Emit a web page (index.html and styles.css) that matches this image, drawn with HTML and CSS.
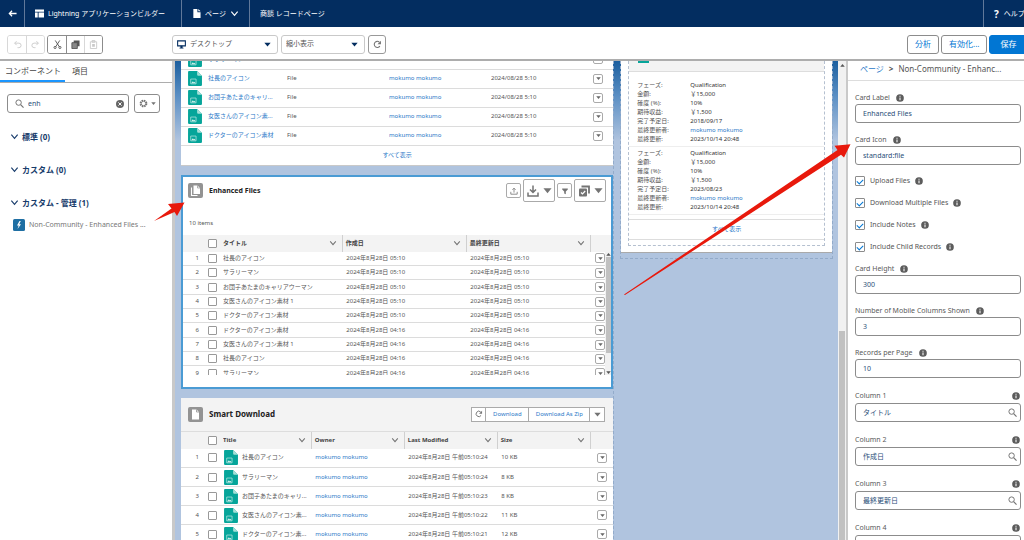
FILE: index.html
```html
<!DOCTYPE html>
<html lang="ja">
<head>
<meta charset="utf-8">
<title>Lightning アプリケーションビルダー</title>
<link rel="stylesheet" href="styles.css">
</head>
<body>
<svg class="sprite" aria-hidden="true">
  <symbol id="chev" viewBox="0 0 10 10"><path d="M1.500 3 5 7 8.500 3" fill="none" stroke="currentColor" stroke-width="1.300"/></symbol>
  <symbol id="tri" viewBox="0 0 10 10"><path d="M0.500 2.500h9L5 8z" fill="currentColor"/></symbol>
  <symbol id="info" viewBox="0 0 10 10"><circle cx="5" cy="5" r="4.800" fill="#5c5c5c"/><path d="M5 2.200v1.300M5 4.500v3.300" stroke="#fff" stroke-width="1.300"/></symbol>
  <symbol id="lens" viewBox="0 0 10 10"><circle cx="4" cy="4" r="3" fill="none" stroke="#747474" stroke-width="1.100"/><path d="M6.200 6.200 9.500 9.500" stroke="#747474" stroke-width="1.300"/></symbol>
  <symbol id="reload" viewBox="0 0 10 10"><path d="M7.600 6.800A3.400 3.400 0 1 1 7 2.300" fill="none" stroke="currentColor" stroke-width="1.200"/><path d="M8.800.8v3.800H5z" fill="currentColor"/></symbol>
  <symbol id="file" viewBox="0 0 13 14"><path d="M1 0h7.500L13 4.500V13a1 1 0 0 1-1 1H1a1 1 0 0 1-1-1V1a1 1 0 0 1 1-1z" fill="#06a59a"/><path d="M8.500 0 13 4.500H9.500a1 1 0 0 1-1-1z" fill="#a5e0d8"/><path d="M2.500 7.500h5v4.500h-5z" fill="none" stroke="#b5e6e0" stroke-width=".7"/><path d="M3 11.500l1.500-2 1 1.200.6-.7 1 1.500z" fill="#d5f2ee"/></symbol>
</svg>

<header class="topbar">
  <button class="top-back" aria-label="戻る"><svg class="i9" viewBox="0 0 10 10"><path d="M9.500 5H1.500M4.500 2 1.500 5l3 3" fill="none" stroke="#fff" stroke-width="1.400"/></svg></button>
  <div class="top-cell app"><svg class="i9" viewBox="0 0 10 10" fill="#fff"><path d="M0 .5h10v2.500H0zM0 4h3v5.500H0zM4 4h6v5.500H4z"/></svg><span>Lightning アプリケーションビルダー</span></div>
  <button class="top-cell page-menu"><svg class="i9" viewBox="0 0 10 10"><path d="M1.500 0h4.500v3.500H9.500V10h-8z" fill="#fff"/><path d="M7 0l2.500 2.500H7z" fill="#fff"/></svg><span>ページ</span><svg class="i9"><use href="#chev"/></svg></button>
  <div class="top-cell record">商談 レコードページ</div>
  <a class="top-cell help" href="#"><b>?</b><span>ヘルプ</span></a>
</header>

<div class="toolbar">
  <div class="tools">
    <div class="group off">
      <button aria-label="元に戻す"><svg class="i9" viewBox="0 0 10 10"><path d="M2 3.500h4.500a2.500 2.500 0 0 1 0 5H5M4 1.300 1.800 3.500 4 5.700" fill="none" stroke="#c9c9c9"/></svg></button>
      <button aria-label="やり直し"><svg class="i9" viewBox="0 0 10 10"><path d="M8 3.500H3.500a2.500 2.500 0 0 0 0 5H5M6 1.300 8.200 3.500 6 5.700" fill="none" stroke="#c9c9c9"/></svg></button>
    </div>
    <div class="group">
      <button aria-label="切り取り"><svg class="i9" viewBox="0 0 10 10" fill="none" stroke="#555"><path d="M2.500.5 7 7.500M7.500.5 3 7.500"/><circle cx="2.300" cy="8.300" r="1.200"/><circle cx="7.700" cy="8.300" r="1.200"/></svg></button>
      <button aria-label="コピー"><svg class="i9" viewBox="0 0 10 10"><path d="M3 .5h6.500V7H3z" fill="#555"/><path d="M1 3h6v6.500H1z" fill="#888" stroke="#555"/></svg></button>
      <button class="dim" aria-label="貼り付け"><svg class="i9" viewBox="0 0 10 10"><path d="M1.500 2h7v7.500h-7zM3.500.5h3v2h-3z" fill="none" stroke="#c9c9c9"/><path d="M3.500 4.500h3v3h-3z" fill="#c9c9c9"/></svg></button>
    </div>
  </div>
  <div class="view">
    <label class="picker wide"><svg class="i9" viewBox="0 0 10 10"><path d="M.7 1h8.600v5.500H.7z" fill="none" stroke="#032d60" stroke-width="1.200"/><path d="M3.800 6.500h2.400v2h1V9.500H2.800v-1h1z" fill="#032d60"/></svg><select aria-label="画面"><option>デスクトップ</option></select><svg class="i7 navy"><use href="#tri"/></svg></label>
    <label class="picker"><select aria-label="表示倍率"><option>縮小表示</option></select><svg class="i7 navy"><use href="#tri"/></svg></label>
    <button class="square" aria-label="更新"><svg class="i9"><use href="#reload"/></svg></button>
  </div>
  <div class="actions">
    <button class="btn">分析</button><button class="btn">有効化...</button><button class="btn brand">保存</button>
  </div>
</div>

<main class="workspace">
  <aside class="left">
    <nav class="tabs"><a class="on" href="#">コンポーネント</a><a href="#">項目</a></nav>
    <div class="search-row">
      <label class="search"><svg class="i9"><use href="#lens"/></svg><input type="text" value="enh" aria-label="検索"><svg class="i8" viewBox="0 0 10 10"><circle cx="5" cy="5" r="5" fill="#666"/><path d="M3 3l4 4M7 3 3 7" stroke="#fff" stroke-width="1.200"/></svg></label>
      <button class="gear" aria-label="設定"><svg class="i9" viewBox="0 0 10 10"><circle cx="5" cy="5" r="3.500" fill="none" stroke="#747474" stroke-width="1.600" stroke-dasharray="1.800 .95"/><circle cx="5" cy="5" r="2.500" fill="none" stroke="#747474"/></svg><svg class="i5"><use href="#tri"/></svg></button>
    </div>
    <h3><svg class="i9"><use href="#chev"/></svg>標準 (0)</h3>
    <h3><svg class="i9"><use href="#chev"/></svg>カスタム (0)</h3>
    <h3><svg class="i9"><use href="#chev"/></svg>カスタム - 管理 (1)</h3>
    <a class="component" href="#"><svg class="i12" viewBox="0 0 12 12"><rect width="12" height="12" rx="1.500" fill="#1f6fa3"/><path d="M6.500 2 4 6.500h1.700L4.500 10 8 5.300H6.200L7.800 2z" fill="#fff"/></svg><span>Non-Community - Enhanced Files ...</span></a>
  </aside>

  <section class="canvas">
    <div class="regions">
      <div class="region main-region">
        <article class="card related">
          <table class="files">
            <colgroup><col class="f-title"><col class="f-col"><col class="f-col"><col class="f-col"><col></colgroup>
            <tr><td><a class="named" href="#"><svg class="doc"><use href="#file"/></svg><span>サラリーマン</span></a></td><td>File</td><td><a href="#">mokumo mokumo</a></td><td>2024/08/28 5:10</td><td class="end"><button class="menu" aria-label="操作"><svg class="i5"><use href="#tri"/></svg></button></td></tr>
            <tr><td><a class="named" href="#"><svg class="doc"><use href="#file"/></svg><span>社長のアイコン</span></a></td><td>File</td><td><a href="#">mokumo mokumo</a></td><td>2024/08/28 5:10</td><td class="end"><button class="menu" aria-label="操作"><svg class="i5"><use href="#tri"/></svg></button></td></tr>
            <tr><td><a class="named" href="#"><svg class="doc"><use href="#file"/></svg><span>お団子あたまのキャリ...</span></a></td><td>File</td><td><a href="#">mokumo mokumo</a></td><td>2024/08/28 5:10</td><td class="end"><button class="menu" aria-label="操作"><svg class="i5"><use href="#tri"/></svg></button></td></tr>
            <tr><td><a class="named" href="#"><svg class="doc"><use href="#file"/></svg><span>女医さんのアイコン素...</span></a></td><td>File</td><td><a href="#">mokumo mokumo</a></td><td>2024/08/28 5:10</td><td class="end"><button class="menu" aria-label="操作"><svg class="i5"><use href="#tri"/></svg></button></td></tr>
            <tr><td><a class="named" href="#"><svg class="doc"><use href="#file"/></svg><span>ドクターのアイコン素材</span></a></td><td>File</td><td><a href="#">mokumo mokumo</a></td><td>2024/08/28 5:10</td><td class="end"><button class="menu" aria-label="操作"><svg class="i5"><use href="#tri"/></svg></button></td></tr>
          </table>
          <a class="all" href="#">すべて表示</a>
        </article>

        <article class="card enhanced">
          <div class="card-head">
            <svg class="i15" viewBox="0 0 15 15"><rect width="15" height="15" rx="2" fill="#939393"/><path d="M5.500 2.500h4L12 5v6H5.500z" fill="#fff"/><path d="M9.500 2.500V5H12" fill="none" stroke="#939393" stroke-width=".7"/><path d="M3.500 4.500V12.500H9.500" fill="none" stroke="#fff" stroke-width="1.100"/></svg>
            <h2>Enhanced Files</h2>
            <button class="small" aria-label="アップロード"><svg class="i8" viewBox="0 0 10 10" fill="none" stroke="currentColor"><path d="M5 7V1.500M3 3.500l2-2 2 2M1 6v3h8V6"/></svg></button>
            <button class="big" aria-label="ダウンロード"><svg class="i12" viewBox="0 0 12 12" fill="none" stroke="currentColor" stroke-width="1.500"><path d="M6 .5V7M3 4.500l3 3 3-3M1 7.500V11h10V7.500"/></svg><svg class="i9"><use href="#tri"/></svg></button>
            <button class="small" aria-label="絞り込み"><svg class="i8" viewBox="0 0 10 10"><path d="M1.500 2h7v1L6 5.500V9L4 8V5.500L1.500 3z" fill="currentColor"/></svg></button>
            <button class="big" aria-label="選択"><svg class="i12" viewBox="0 0 12 12"><path d="M3.500 1.500h7.500v7" fill="none" stroke="currentColor" stroke-width="1.800"/><rect x="1" y="3.500" width="8" height="8" rx="1" fill="currentColor"/><path d="M3 7.500 4.500 9 7.200 6" fill="none" stroke="#fff" stroke-width="1.200"/></svg><svg class="i9"><use href="#tri"/></svg></button>
          </div>
          <p class="count">10 items</p>
          <table class="grid">
            <colgroup><col class="g-num"><col class="g-check"><col><col class="g-date"><col class="g-date"><col class="g-end"></colgroup>
            <tr><th></th><th><input type="checkbox" aria-label="すべて選択"></th><th><div>タイトル<svg class="i8"><use href="#chev"/></svg></div></th><th><div>作成日<svg class="i8"><use href="#chev"/></svg></div></th><th><div>最終更新日<svg class="i8"><use href="#chev"/></svg></div></th><th></th></tr>
          </table>
          <div class="scroller">
          <table class="grid rows">
            <colgroup><col class="g-num"><col class="g-check"><col><col class="g-date"><col class="g-date"><col class="g-end2"></colgroup>
            <tr><td class="n">1</td><td><input type="checkbox" aria-label="1"></td><td>社長のアイコン</td><td>2024年8月28日 05:10</td><td>2024年8月28日 05:10</td><td class="end"><button class="menu" aria-label="操作"><svg class="i5"><use href="#tri"/></svg></button></td></tr>
            <tr><td class="n">2</td><td><input type="checkbox" aria-label="2"></td><td>サラリーマン</td><td>2024年8月28日 05:10</td><td>2024年8月28日 05:10</td><td class="end"><button class="menu" aria-label="操作"><svg class="i5"><use href="#tri"/></svg></button></td></tr>
            <tr><td class="n">3</td><td><input type="checkbox" aria-label="3"></td><td>お団子あたまのキャリアウーマン</td><td>2024年8月28日 05:10</td><td>2024年8月28日 05:10</td><td class="end"><button class="menu" aria-label="操作"><svg class="i5"><use href="#tri"/></svg></button></td></tr>
            <tr><td class="n">4</td><td><input type="checkbox" aria-label="4"></td><td>女医さんのアイコン素材 1</td><td>2024年8月28日 05:10</td><td>2024年8月28日 05:10</td><td class="end"><button class="menu" aria-label="操作"><svg class="i5"><use href="#tri"/></svg></button></td></tr>
            <tr><td class="n">5</td><td><input type="checkbox" aria-label="5"></td><td>ドクターのアイコン素材</td><td>2024年8月28日 05:10</td><td>2024年8月28日 05:10</td><td class="end"><button class="menu" aria-label="操作"><svg class="i5"><use href="#tri"/></svg></button></td></tr>
            <tr><td class="n">6</td><td><input type="checkbox" aria-label="6"></td><td>ドクターのアイコン素材</td><td>2024年8月28日 04:16</td><td>2024年8月28日 04:16</td><td class="end"><button class="menu" aria-label="操作"><svg class="i5"><use href="#tri"/></svg></button></td></tr>
            <tr><td class="n">7</td><td><input type="checkbox" aria-label="7"></td><td>女医さんのアイコン素材 1</td><td>2024年8月28日 04:16</td><td>2024年8月28日 04:16</td><td class="end"><button class="menu" aria-label="操作"><svg class="i5"><use href="#tri"/></svg></button></td></tr>
            <tr><td class="n">8</td><td><input type="checkbox" aria-label="8"></td><td>社長のアイコン</td><td>2024年8月28日 04:16</td><td>2024年8月28日 04:16</td><td class="end"><button class="menu" aria-label="操作"><svg class="i5"><use href="#tri"/></svg></button></td></tr>
            <tr><td class="n">9</td><td><input type="checkbox" aria-label="9"></td><td>サラリーマン</td><td>2024年8月28日 04:16</td><td>2024年8月28日 04:16</td><td class="end"><button class="menu" aria-label="操作"><svg class="i5"><use href="#tri"/></svg></button></td></tr>
          </table>
          <div class="mini-bar"><svg class="i5 up"><use href="#tri"/></svg><div class="mini-thumb"></div><svg class="i5"><use href="#tri"/></svg></div>
          </div>
        </article>

        <article class="card smart">
          <div class="card-head">
            <svg class="i15" viewBox="0 0 15 15"><rect width="15" height="15" rx="2" fill="#939393"/><path d="M4 2.500h4.500L11 5v7.500H4z" fill="#fff"/><path d="M8.500 2.500V5H11" fill="none" stroke="#939393" stroke-width=".8"/></svg>
            <h2>Smart Download</h2>
            <div class="joined"><button aria-label="更新"><svg class="i8"><use href="#reload"/></svg></button><button class="dl">Download</button><button class="zip">Download As Zip</button><button aria-label="その他"><svg class="i7"><use href="#tri"/></svg></button></div>
          </div>
          <table class="grid downloads">
            <colgroup><col class="g-num"><col class="g-check"><col><col class="s-col"><col class="s-col"><col class="s-col"><col class="s-end"></colgroup>
            <tr><th></th><th><input type="checkbox" aria-label="すべて選択"></th><th><div>Title<svg class="i8"><use href="#chev"/></svg></div></th><th><div>Owner<svg class="i8"><use href="#chev"/></svg></div></th><th><div>Last Modified<svg class="i8"><use href="#chev"/></svg></div></th><th><div>Size<svg class="i8"><use href="#chev"/></svg></div></th><th></th></tr>
            <tr><td class="n">1</td><td><input type="checkbox" aria-label="1"></td><td><span class="named"><svg class="doc"><use href="#file"/></svg><span>社長のアイコン</span></span></td><td><a href="#">mokumo mokumo</a></td><td>2024年8月28日 午前05:10:24</td><td>10 KB</td><td class="end"><button class="menu" aria-label="操作"><svg class="i5"><use href="#tri"/></svg></button></td></tr>
            <tr><td class="n">2</td><td><input type="checkbox" aria-label="2"></td><td><span class="named"><svg class="doc"><use href="#file"/></svg><span>サラリーマン</span></span></td><td><a href="#">mokumo mokumo</a></td><td>2024年8月28日 午前05:10:24</td><td>8 KB</td><td class="end"><button class="menu" aria-label="操作"><svg class="i5"><use href="#tri"/></svg></button></td></tr>
            <tr><td class="n">3</td><td><input type="checkbox" aria-label="3"></td><td><span class="named"><svg class="doc"><use href="#file"/></svg><span>お団子あたまのキャリ...</span></span></td><td><a href="#">mokumo mokumo</a></td><td>2024年8月28日 午前05:10:23</td><td>8 KB</td><td class="end"><button class="menu" aria-label="操作"><svg class="i5"><use href="#tri"/></svg></button></td></tr>
            <tr><td class="n">4</td><td><input type="checkbox" aria-label="4"></td><td><span class="named"><svg class="doc"><use href="#file"/></svg><span>女医さんのアイコン素...</span></span></td><td><a href="#">mokumo mokumo</a></td><td>2024年8月28日 午前05:10:22</td><td>11 KB</td><td class="end"><button class="menu" aria-label="操作"><svg class="i5"><use href="#tri"/></svg></button></td></tr>
            <tr><td class="n">5</td><td><input type="checkbox" aria-label="5"></td><td><span class="named"><svg class="doc"><use href="#file"/></svg><span>ドクターのアイコン素...</span></span></td><td><a href="#">mokumo mokumo</a></td><td>2024年8月28日 午前05:10:21</td><td>12 KB</td><td class="end"><button class="menu" aria-label="操作"><svg class="i5"><use href="#tri"/></svg></button></td></tr>
          </table>
        </article>
      </div>

      <div class="region side-region">
        <div class="side-card">
          <div class="side-inner">
            <div class="side-head"><span class="side-icon"></span></div>
            <dl><dt>フェーズ:</dt><dd>Qualification</dd><dt>金額:</dt><dd>￥15,000</dd><dt>確度 (%):</dt><dd>10%</dd><dt>期待収益:</dt><dd>￥1,500</dd><dt>完了予定日:</dt><dd>2018/09/17</dd><dt>最終更新者:</dt><dd><a href="#">mokumo mokumo</a></dd><dt>最終更新:</dt><dd>2023/10/14 20:48</dd></dl>
            <dl><dt>フェーズ:</dt><dd>Qualification</dd><dt>金額:</dt><dd>￥15,000</dd><dt>確度 (%):</dt><dd>10%</dd><dt>期待収益:</dt><dd>￥1,500</dd><dt>完了予定日:</dt><dd>2023/08/23</dd><dt>最終更新者:</dt><dd><a href="#">mokumo mokumo</a></dd><dt>最終更新:</dt><dd>2023/10/14 20:48</dd></dl>
            <a class="all side-all" href="#">すべて表示</a>
          </div>
        </div>
      </div>
    </div>
    <div class="bar"><svg class="i5 up"><use href="#tri"/></svg><div class="thumb"></div></div>
  </section>

  <aside class="props">
    <div class="crumbs"><a href="#">ページ</a><b>&gt;</b><span>Non-Community - Enhanc...</span></div>
    <form class="fields">
      <div class="field"><div class="lab"><label for="f1">Card Label</label><svg class="i8"><use href="#info"/></svg></div><input id="f1" type="text" value="Enhanced Files"></div>
      <div class="field"><div class="lab"><label for="f2">Card Icon</label><svg class="i8"><use href="#info"/></svg></div><input id="f2" type="text" value="standard:file"></div>
      <div class="checks">
        <div><input type="checkbox" id="c1" checked><label for="c1">Upload Files</label><svg class="i8"><use href="#info"/></svg></div>
        <div><input type="checkbox" id="c2" checked><label for="c2">Download Multiple Files</label><svg class="i8"><use href="#info"/></svg></div>
        <div><input type="checkbox" id="c3" checked><label for="c3">Include Notes</label><svg class="i8"><use href="#info"/></svg></div>
        <div><input type="checkbox" id="c4" checked><label for="c4">Include Child Records</label><svg class="i8"><use href="#info"/></svg></div>
      </div>
      <div class="field"><div class="lab"><label for="f3">Card Height</label><svg class="i8"><use href="#info"/></svg></div><input id="f3" type="text" value="300"></div>
      <div class="field"><div class="lab"><label for="f4">Number of Mobile Columns Shown</label><svg class="i8"><use href="#info"/></svg></div><input id="f4" type="text" value="3"></div>
      <div class="field"><div class="lab"><label for="f5">Records per Page</label><svg class="i8"><use href="#info"/></svg></div><input id="f5" type="text" value="10"></div>
      <div class="field column"><div class="lab"><label for="f6">Column 1</label><svg class="i8"><use href="#info"/></svg></div><div class="lookup"><input id="f6" type="text" value="タイトル"><svg class="i9"><use href="#lens"/></svg></div></div>
      <div class="field column"><div class="lab"><label for="f7">Column 2</label><svg class="i8"><use href="#info"/></svg></div><div class="lookup"><input id="f7" type="text" value="作成日"><svg class="i9"><use href="#lens"/></svg></div></div>
      <div class="field column"><div class="lab"><label for="f8">Column 3</label><svg class="i8"><use href="#info"/></svg></div><div class="lookup"><input id="f8" type="text" value="最終更新日"><svg class="i9"><use href="#lens"/></svg></div></div>
      <div class="field column"><div class="lab"><label for="f9">Column 4</label><svg class="i8"><use href="#info"/></svg></div><div class="lookup"><input id="f9" type="text" value=""><svg class="i9"><use href="#lens"/></svg></div></div>
    </form>
  </aside>
</main>

<svg class="arrows" viewBox="0 0 1024 540" aria-hidden="true" fill="#e8190c">
  <path d="M154 221 171.500 208.500 168 204 184.500 202.500 177 216 174.500 212z"/>
  <path d="M624 294.500 837.500 150 834.500 145.800 850.500 144.300 844 157.500 841 154.800 625 295z"/>
</svg>
</body>
</html>
```
FILE: styles.css
```css
* { box-sizing: border-box; }
html, body { height: 100%; }
body {
  margin: 0;
  display: flex;
  flex-direction: column;
  overflow: hidden;
  position: relative;
  font: 7px/10px "Noto Sans", "Noto Sans CJK JP", sans-serif;
  color: #555;
  background: #fff;
}
button, input, select { font: inherit; color: inherit; margin: 0; padding: 0; }
button { background: #fff; border: 0; display: flex; align-items: center; justify-content: center; }
a { color: #2a78c8; text-decoration: none; }
h2, h3, p, dl, dd { margin: 0; }
svg { flex: none; display: block; }
table { border-collapse: collapse; table-layout: fixed; width: 100%; }
td, th { padding: 0; white-space: nowrap; overflow: hidden; text-align: left; }

.sprite { position: absolute; width: 0; height: 0; }
.i5 { width: 5px; height: 5px; }
.i7 { width: 7px; height: 7px; }
.i8 { width: 8px; height: 8px; }
.i9 { width: 9px; height: 9px; }
.i12 { width: 12px; height: 12px; }
.i15 { width: 15px; height: 15px; }
.up { transform: rotate(180deg); }
.navy { color: #032d60; }

/* global header */
.topbar { flex: none; display: flex; height: 27px; background: #032d60; color: #fff; white-space: nowrap; }
.top-back { width: 25px; background: none; border-right: 1px solid #60789a; }
.top-cell { display: flex; align-items: center; gap: 4px; padding: 0 10px; border-right: 1px solid #60789a; background: none; color: #fff; }
.app { width: 157px; }
.page-menu { width: 68px; }
.record { border: 0; }
.help { margin-left: auto; width: 41px; border-right: 0; border-left: 1px solid #60789a; overflow: hidden; gap: 5px; }
.help b { font-size: 10px; }

/* toolbar */
.toolbar { flex: none; display: flex; height: 34px; padding: 2px 0 0 7px; align-items: center; border-bottom: 2px solid #adadad; overflow: hidden; }
.tools { width: 165px; display: flex; gap: 2px; }
.group { display: flex; border: 1px solid #8c8c8c; border-radius: 3px; height: 19px; overflow: hidden; }
.group button { width: 18px; }
.group button + button { border-left: 1px solid #8c8c8c; }
.group.off, .group.off button + button { border-color: #d8d8d8; }
.group .dim { border-color: #d8d8d8; }
.view { display: flex; gap: 3px; flex: 1; }
.picker { display: flex; align-items: center; width: 84px; height: 19px; border: 1px solid #c9c9c9; border-radius: 3px; padding: 0 6px 0 4px; gap: 4px; }
.picker.wide { width: 106px; }
.picker select { appearance: none; border: 0; background: none; flex: 1; min-width: 0; }
.square { width: 18px; height: 19px; border: 1px solid #999; border-radius: 3px; color: #747474; }
.actions { display: flex; gap: 2px; width: 117px; flex: none; white-space: nowrap; }
.btn { flex: none; height: 19px; border: 1px solid #8c8c8c; border-radius: 3px; color: #0176d3; font-size: 8px; padding: 0 7px; }
.btn.brand { background: #0176d3; border-color: #0176d3; color: #fff; padding: 0 10px; }

.workspace { flex: 1; min-height: 0; display: flex; }

/* component palette */
.left { width: 175px; flex: none; border-right: 3px solid #c9c9c9; }
.tabs { display: flex; height: 22px; border-bottom: 1px solid #adadad; font-size: 8px; }
.tabs a { color: #444; padding: 0 7px; line-height: 20px; }
.tabs .on { padding: 0 4px 0 5px; border-bottom: 2px solid #1b96ff; }
.search-row { display: flex; gap: 5px; padding: 11px 12px 18px 7px; }
.search { display: flex; flex: 1; min-width: 0; align-items: center; gap: 4px; height: 19px; border: 1px solid #8c8c8c; border-radius: 3px; padding: 0 4px 0 7px; }
.search input { flex: 1; width: 0; border: 0; outline: 0; color: #2b5079; }
.gear { flex: none; width: 26px; border: 1px solid #8c8c8c; border-radius: 3px; gap: 3px; color: #747474; }
.left h3 { display: flex; align-items: center; gap: 3px; height: 11px; margin: 0 0 22px 10px; font-size: 8px; color: #173b6b; }
.left h3 + .component { margin-top: -11px; }
.component { display: flex; align-items: center; gap: 4px; padding-left: 13px; color: #777; white-space: nowrap; }

/* page preview */
.canvas { flex: 1; min-width: 0; display: flex; background: linear-gradient(#1c5f9f, #5b8fc4 35px, #b0c4df 80px); overflow: hidden; }
.regions { flex: 1; min-width: 0; display: flex; gap: 6px; padding: 0 5px; align-items: flex-start; font-size: 6px; line-height: 9px; }
.region { min-width: 0; }
.main-region { flex: 435; padding-left: 1px; border-right: 1px dashed #93abca; }
.side-region { flex: 212; border: 1px dashed #93abca; border-top: 0; padding-bottom: 5px; }
.card { background: #fff; }
.related { margin: -11px 0 9px; border-bottom: 1px solid #c9c9c9; }
.files td { height: 19px; border-bottom: 1px solid #dcdcdc; }
.files td:first-child { padding-left: 7px; }
.f-title { width: 106px; }
.f-col { width: 102px; }
.named { display: flex; align-items: center; gap: 6px; }
.doc { width: 14px; height: 15px; }
.end { text-align: right; }
.menu { width: 10px; height: 10px; border: 1px solid #aaa; border-radius: 2px; color: #666; margin-left: auto; }
.files .end { padding-right: 11px; }
.all { display: block; text-align: center; line-height: 19px; font-size: 6px; }

.card-head { display: flex; align-items: center; color: #222; }
.card-head h2 { flex: 1; margin-left: 4px; font-size: 7px; line-height: 12px; }
.card-head button { color: #747474; border: 1px solid #aaa; border-radius: 2px; }
.enhanced { border: 2px solid #4a9bd4; height: 214px; margin-bottom: 9px; }
.enhanced .card-head { height: 28px; padding: 0 5px; gap: 2px; }
.small { width: 15px; height: 15px; }
.big { width: 32px; height: 23px; gap: 4px; }
.count { padding: 14px 6px 7px; line-height: 9px; }
.grid th { height: 17px; background: #f3f3f3; color: #444; }
.grid th div { display: flex; justify-content: space-between; align-items: center; height: 15px; padding-right: 5px; }
.grid th svg { color: #747474; }
.grid th + th + th + th { border-left: 1px solid #d0d0d0; padding-left: 3px; }
.grid td + td + td + td { padding-left: 4px; }
.g-num { width: 25px; }
.g-check { width: 15px; }
.g-date { width: 124px; }
.g-end { width: 21px; }
.g-end2 { width: 15px; }
.grid .n { text-align: right; padding-right: 9px; }
.grid input { appearance: none; display: block; width: 9px; height: 9px; border: 1px solid #999; border-radius: 1px; background: #fff; }
.grid td { border-bottom: 1px solid #dcdcdc; }
.scroller { display: flex; height: 123px; overflow: hidden; }
.rows { flex: 1; width: auto; min-width: 0; align-self: flex-start; }
.rows td { height: 14px; }
.rows tr:nth-child(3n) td { height: 15px; }
.mini-bar { flex: none; width: 6px; background: #f1f1f1; display: flex; flex-direction: column; align-items: center; color: #555; }
.mini-thumb { width: 5px; height: 96px; background: #c1c1c1; margin-bottom: auto; }

.smart { background: #f3f3f3; }
.smart .card-head { height: 34px; padding: 0 8px 0 7px; border-bottom: 1px solid #ddd; }
.smart h2 { font-size: 8px; margin-left: 6px; }
.joined { display: flex; }
.joined button { width: 15px; height: 15px; border-radius: 0; }
.joined button + button { border-left: 0; }
.joined .dl { width: 43px; color: #2a78c8; }
.joined .zip { width: 61px; color: #2a78c8; }
.downloads { background: #fff; }
.downloads td { height: 19px; }
.downloads .g-num { width: 27px; }
.downloads .named { gap: 4px; padding-left: 1px; }
.downloads .end { padding-right: 6px; }
.s-col { width: 93px; }
.s-end { width: 23px; }

.side-card { background: #fff; padding: 0 7px 6px; border-bottom: 1px solid #aaa; }
.side-inner { border: 1px dashed #b5c0d0; border-top: 0; padding-bottom: 5px; }
.side-head { height: 11px; background: #f3f3f3; border-bottom: 1px solid #ddd; padding-left: 9px; }
.side-icon { display: block; width: 11px; height: 2px; background: #06a59a; }
.side-inner dl { display: grid; grid-template-columns: 53px 1fr; padding: 2px 0 2px 8px; border-bottom: 1px solid #eee; white-space: nowrap; }
.side-head + dl { padding-top: 9px; }
.side-inner dd { color: #333; }
.side-all { border: solid #ddd; border-width: 1px 0; margin-top: 4px; }

.bar { flex: none; width: 10px; background: #f1f1f1; border-right: 2px solid #c9c9c9; display: flex; flex-direction: column; align-items: center; padding-top: 2px; color: #555; }
.thumb { width: 6px; height: 209px; margin-top: auto; background: #c1c1c1; flex: none; }

/* property pane */
.props { flex: none; width: 176px; }
.crumbs { display: flex; gap: 5px; height: 20px; line-height: 16px; padding-left: 12px; border-bottom: 1px solid #ddd; font-size: 8px; white-space: nowrap; }
.fields { display: flex; flex-direction: column; gap: 11px; padding: 11px 3px 0 7px; }
.lab { display: flex; align-items: center; gap: 6px; height: 12px; color: #5a5a5a; }
.field > input, .lookup { width: 100%; height: 19px; border: 1px solid #8c8c8c; border-radius: 3px; padding: 0 7px; color: #2b5079; }
.field > input { display: block; }
.lookup { display: flex; align-items: center; padding-right: 3px; }
.lookup input { flex: 1; min-width: 0; border: 0; outline: 0; }
.column .lab { height: 14px; justify-content: space-between; }
.column .lab svg { margin-right: 1px; }
.checks { display: grid; gap: 12px; }
.checks div { display: flex; align-items: center; height: 10px; gap: 5px; }
.checks input { appearance: none; width: 10px; height: 10px; border: 1px solid #8c8c8c; border-radius: 1px; display: flex; align-items: center; justify-content: center; }
.checks input:checked::before { content: ""; width: 5px; height: 3px; border: solid #0176d3; border-width: 0 0 1px 1px; transform: rotate(-45deg); }

/* callout arrows lie over the whole window */
.arrows { position: absolute; inset: 0; width: 100%; height: 100%; pointer-events: none; }
```
